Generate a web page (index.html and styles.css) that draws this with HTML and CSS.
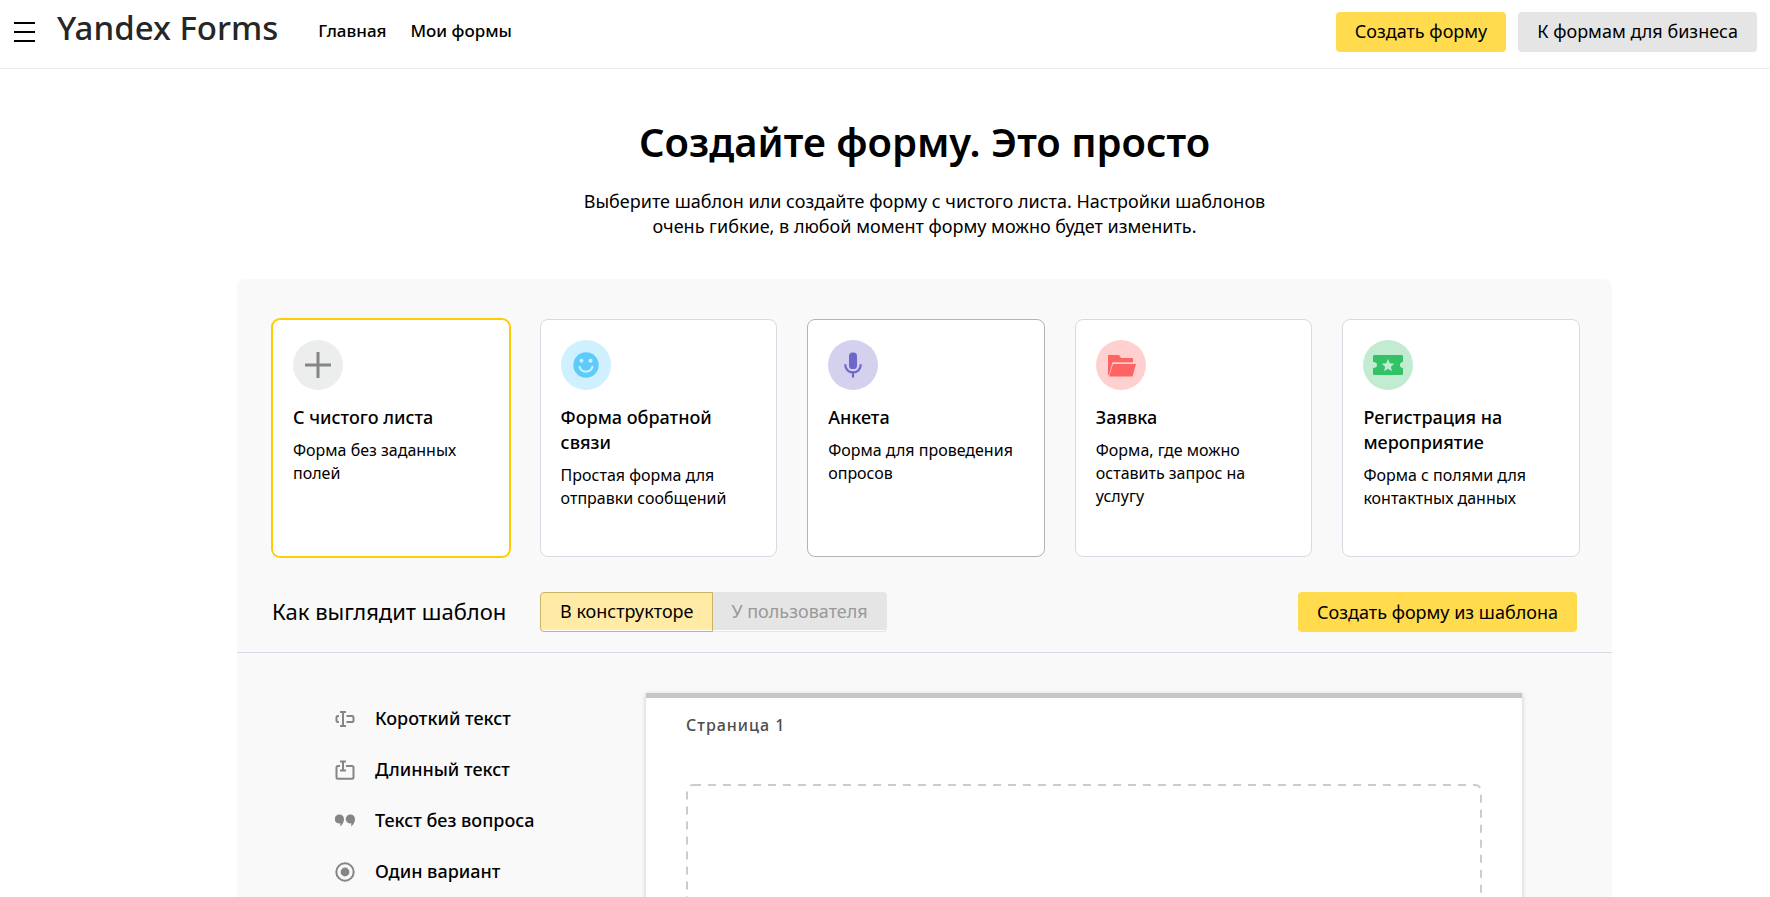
FILE: index.html
```html
<!DOCTYPE html>
<html lang="ru">
<head>
<meta charset="utf-8">
<meta name="viewport" content="width=device-width, initial-scale=1">
<title>Yandex Forms</title>
<link rel="stylesheet" href="styles.css">
</head>
<body>
<header class="header">
  <button class="menu" type="button" aria-label="Меню"><span class="menu-line"></span><span class="menu-line"></span><span class="menu-line"></span></button>
  <a class="logo" href="#">Yandex Forms</a>
  <nav class="nav">
    <a class="nav-link" href="#">Главная</a>
    <a class="nav-link" href="#">Мои формы</a>
  </nav>
  <div class="header-actions">
    <button class="button button-primary" type="button">Создать форму</button>
    <button class="button button-plain" type="button">К формам для бизнеса</button>
  </div>
</header>
<main class="main">
  <section class="intro">
    <h1 class="title">Создайте форму. Это просто</h1>
    <p class="lead">Выберите шаблон или создайте форму с чистого листа. Настройки шаблонов очень гибкие, в любой момент форму можно будет изменить.</p>
  </section>
  <section class="panel">
    <div class="cards">
      <button class="card card-selected" type="button">
        <svg class="card-icon" viewBox="0 0 50 50" aria-hidden="true"><circle cx="25" cy="25" r="25" fill="#eceded"/><path d="M25 12v26M12 25h26" stroke="#858585" stroke-width="3" fill="none"/></svg>
        <span class="card-title">С чистого листа</span>
        <span class="card-text">Форма без заданных полей</span>
      </button>
      <button class="card" type="button">
        <svg class="card-icon" viewBox="0 0 50 50" aria-hidden="true"><circle cx="25" cy="25" r="25" fill="#cff0fe"/><circle cx="25" cy="25" r="12.7" fill="#5ecbfa"/><circle cx="20.5" cy="20.8" r="2" fill="#cff0fe"/><circle cx="29.5" cy="20.8" r="2" fill="#cff0fe"/><path d="M18.6 27c1 3 3.400 4.700 6.400 4.700s5.400-1.700 6.400-4.700" stroke="#cff0fe" stroke-width="2.200" stroke-linecap="round" fill="none"/></svg>
        <span class="card-title">Форма обратной связи</span>
        <span class="card-text">Простая форма для отправки сообщений</span>
      </button>
      <button class="card card-hover" type="button">
        <svg class="card-icon" viewBox="0 0 50 50" aria-hidden="true"><circle cx="25" cy="25" r="25" fill="#d3d1ee"/><rect x="21" y="12.500" width="8" height="16.500" rx="3.600" fill="#6d67c8"/><path d="M17.200 24.200c0 5 3.400 8.200 7.800 8.200s7.800-3.200 7.800-8.200M25 32v5.500" stroke="#6d67c8" stroke-width="2.200" fill="none"/></svg>
        <span class="card-title">Анкета</span>
        <span class="card-text">Форма для проведения опросов</span>
      </button>
      <button class="card" type="button">
        <svg class="card-icon" viewBox="0 0 50 50" aria-hidden="true"><circle cx="25" cy="25" r="25" fill="#ffd0d0"/><path d="M12 15h11l2 3h12v4.200H16.500L13 35h-1z" fill="#ff6464"/><path d="M17 24h23l-3.500 12.500H13z" fill="#ff6464"/></svg>
        <span class="card-title">Заявка</span>
        <span class="card-text">Форма, где можно оставить запрос на услугу</span>
      </button>
      <button class="card" type="button">
        <svg class="card-icon" viewBox="0 0 50 50" aria-hidden="true"><circle cx="25" cy="25" r="25" fill="#c2ecd1"/><path d="M10 16q0-1 1-1h28q1 0 1 1v6a3 3 0 0 0 0 6v6q0 1-1 1H11q-1 0-1-1v-6a4 3 0 0 0 0-6z" fill="#34c266"/><path d="M25 19l1.800 4.300 4.400.4-3.300 3 1 4.500-3.900-2.400-3.900 2.400 1-4.500-3.300-3 4.400-.4z" fill="#c2ecd1"/></svg>
        <span class="card-title">Регистрация на мероприятие</span>
        <span class="card-text">Форма с полями для контактных данных</span>
      </button>
    </div>
    <div class="toolbar">
      <h2 class="toolbar-title">Как выглядит шаблон</h2>
      <div class="toggle" role="radiogroup" aria-label="Как выглядит шаблон">
        <input class="toggle-input" type="radio" name="view" id="view-builder" checked>
        <label class="toggle-label" for="view-builder">В конструкторе</label>
        <input class="toggle-input" type="radio" name="view" id="view-user">
        <label class="toggle-label" for="view-user">У пользователя</label>
      </div>
      <button class="button button-primary toolbar-create" type="button">Создать форму из шаблона</button>
    </div>
    <div class="preview">
      <ul class="fields">
        <li class="field"><svg class="field-icon" viewBox="0 0 20 20" aria-hidden="true"><path d="M4 7H3Q1.500 7 1.500 8.500v3Q1.500 13 3 13h1M11.500 7H17q1.500 0 1.500 1.500v3Q18.500 13 17 13h-5.500M5 3h6M5 17h6M8 3v14" fill="none" stroke="#858585" stroke-width="2"/></svg>Короткий текст</li>
        <li class="field"><svg class="field-icon" viewBox="0 0 20 20" aria-hidden="true"><path d="M5 6H3Q1.500 6 1.500 7.500v9.800q0 1.500 1.500 1.500h14q1.500 0 1.500-1.500V7.500Q18.500 6 17 6h-6M5 1.500h6M5 10.500h6M8 1.500v9" fill="none" stroke="#858585" stroke-width="2"/></svg>Длинный текст</li>
        <li class="field"><svg class="field-icon" viewBox="0 0 20 20" aria-hidden="true"><path d="M4.500 3.500a4.500 4.500 0 0 1 4.500 4.500c0 3-1.500 6-4 7.500l.5-3.200A4.500 4.500 0 1 1 4.500 3.500zM15.500 3.500A4.500 4.500 0 0 1 20 8c0 3-1.500 6-4 7.500l.5-3.200a4.500 4.500 0 1 1-1-8.800z" fill="#858585"/></svg>Текст без вопроса</li>
        <li class="field"><svg class="field-icon" viewBox="0 0 20 20" aria-hidden="true"><circle cx="10" cy="10" r="8.700" fill="none" stroke="#858585" stroke-width="2"/><circle cx="10" cy="10" r="4.400" fill="#858585"/></svg>Один вариант</li>
      </ul>
      <div class="sheet">
        <h3 class="sheet-title">Страница 1</h3>
        <svg class="dropzone" aria-hidden="true"><rect class="dropzone-frame" x="1" y="1" rx="6"/></svg>
      </div>
    </div>
  </section>
</main>
</body>
</html>
```
FILE: styles.css
```css
* {
  box-sizing: border-box;
}

body {
  margin: 0;
  background: #fff;
  color: #000;
  font-family: "Noto Sans", "Open Sans", sans-serif;
  font-size: 18px;
  line-height: 25px;
}

h1, h2, h3, p, ul {
  margin: 0;
  padding: 0;
  font-weight: 400;
}

button {
  font: inherit;
  color: inherit;
  cursor: pointer;
}

a {
  color: inherit;
  text-decoration: none;
}

.header {
  display: flex;
  align-items: center;
  height: 69px;
  padding: 0 13px 5px 14px;
  border-bottom: 1px solid #ececec;
}

.menu {
  display: flex;
  flex-direction: column;
  gap: 7px;
  width: 21px;
  padding: 0;
  border: 0;
  background: none;
}

.menu-line {
  height: 2px;
  background: #000;
}

.logo {
  margin: 0 40px 8px 22px;
  color: #262626;
  font-size: 33px;
  font-weight: 500;
  line-height: 44px;
}

.nav {
  display: flex;
  gap: 24px;
  padding-bottom: 2px;
  font-size: 17px;
  font-weight: 500;
}

.header-actions {
  display: flex;
  gap: 12px;
  margin-left: auto;
}

.button {
  height: 40px;
  padding: 0 19px;
  border: 0;
  border-radius: 4px;
  white-space: nowrap;
}

.button-primary {
  background: #ffdb4d;
}

.button-plain {
  background: #e5e5e5;
}

.main {
  padding: 43px 0 0 79px;
}

.intro {
  text-align: center;
}

.title {
  font-size: 40px;
  font-weight: 600;
  line-height: 60px;
}

.lead {
  max-width: 700px;
  margin: 17px auto 40px;
}

.panel {
  max-width: 1375px;
  margin: 0 auto;
  padding-top: 40px;
  border-radius: 8px;
  background: #f9f9f9;
}

.cards {
  display: grid;
  grid-template-columns: repeat(5, 1fr);
  gap: 30px;
  padding: 0 32px 0 35px;
}

.card {
  display: flex;
  flex-direction: column;
  align-items: flex-start;
  min-height: 238px;
  padding: 20px;
  border: 1px solid #d9d9e3;
  border-radius: 8px;
  background: #fff;
  text-align: left;
}

.card-selected {
  border-color: #fc0;
  box-shadow: 0 0 0 1px #fc0;
}

.card-hover {
  border-color: #b3b3b3;
}

.card-icon {
  width: 50px;
  height: 50px;
}

.card-title {
  margin: 15px 0 9px;
  font-weight: 500;
}

.card-text {
  font-size: 16px;
  line-height: 23px;
}

.toolbar {
  display: flex;
  align-items: center;
  padding: 35px 35px 20px;
  border-bottom: 1px solid #d9d9e3;
}

.toolbar-title {
  width: 268px;
  padding-bottom: 2px;
  font-size: 22px;
  line-height: 30px;
}

.toggle {
  display: flex;
}

.toggle-input {
  position: absolute;
  opacity: 0;
}

.toggle-label {
  height: 40px;
  padding: 6px 18px;
  border: 1px solid #e5e5e5;
  border-left: 0;
  border-radius: 0 4px 4px 0;
  background: #e5e5e5;
  box-shadow: inset 0 -1px #fff;
  color: #999;
  cursor: pointer;
}

.toggle-label:first-of-type {
  padding: 6px 19px;
  border-left: 1px solid #e5e5e5;
  border-radius: 4px 0 0 4px;
}

.toggle-input:checked + .toggle-label {
  border-color: #c9b367;
  background: #ffeba6;
  color: #000;
}

.toolbar-create {
  margin-left: auto;
}

.preview {
  display: grid;
  grid-template-columns: 311px 1fr;
  padding: 40px 90px 40px 98px;
}

.fields {
  display: flex;
  flex-direction: column;
  gap: 26px;
  padding-top: 13px;
  font-weight: 500;
  list-style: none;
}

.field {
  display: flex;
  align-items: center;
  gap: 20px;
}

.field-icon {
  width: 20px;
  height: 20px;
}

.sheet {
  padding: 15px 40px 40px;
  border-top: 5px solid #c6c6c6;
  background: #fff;
  box-shadow: 0 1px 5px rgba(0, 0, 0, 0.2);
}

.sheet-title {
  margin-bottom: 46px;
  color: #4d4d4d;
  font-size: 16px;
  font-weight: 500;
  letter-spacing: 1px;
}

.dropzone {
  display: block;
  width: 100%;
  height: 400px;
}

.dropzone-frame {
  width: calc(100% - 2px);
  height: calc(100% - 2px);
  fill: none;
  stroke: #ccc;
  stroke-width: 2px;
  stroke-dasharray: 8 7;
}
```
